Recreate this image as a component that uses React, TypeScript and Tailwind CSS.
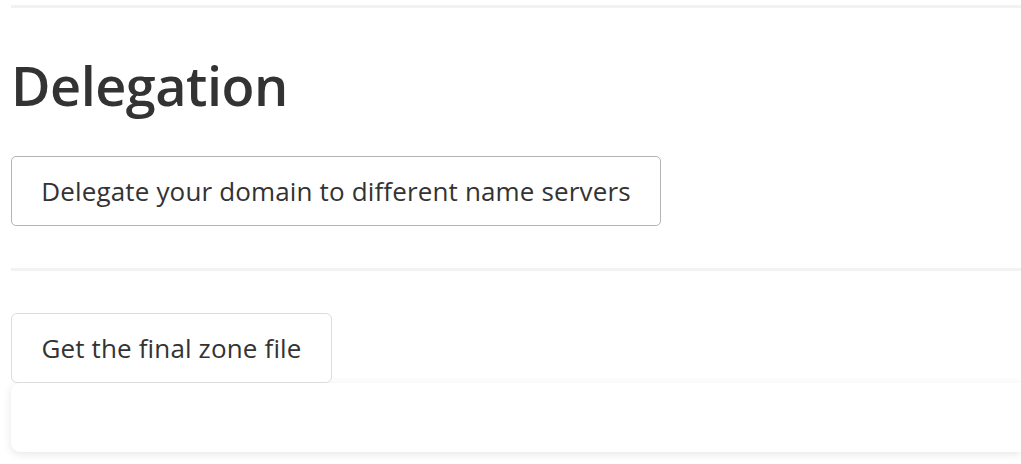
import React from 'react';

const font = { fontFamily: '"Open Sans", "Noto Sans", sans-serif' };

export default function App() {
    return (
        <div className="min-h-[464px] bg-white text-[#333333]" style={font}>
            <div className="pl-[11px] pt-[5px]">
                <div className="h-[3px] bg-[#f2f2f2]" />
                <h1 className="mt-[41px] text-[54px] leading-[72px] font-semibold tracking-[-0.5px]">Delegation</h1>
                <button className="mt-[35px] h-[70px] w-[650px] rounded-[5px] border border-[#b3b3b3] bg-white text-[26px] tracking-[0.15px] text-[#333333]">
                    Delegate your domain to different name servers
                </button>
                <div className="mt-[42px] h-[3px] bg-[#f2f2f2]" />
                <button className="mt-[42px] h-[70px] w-[321px] rounded-[6px] border border-[#dddddd] bg-white text-[26px] tracking-[0.15px] text-[#333333]">
                    Get the final zone file
                </button>
                <div className="h-[69px] rounded-l-[9px] bg-white shadow-[0_2px_10px_rgba(0,0,0,0.1)]" />
            </div>
        </div>
    );
}
